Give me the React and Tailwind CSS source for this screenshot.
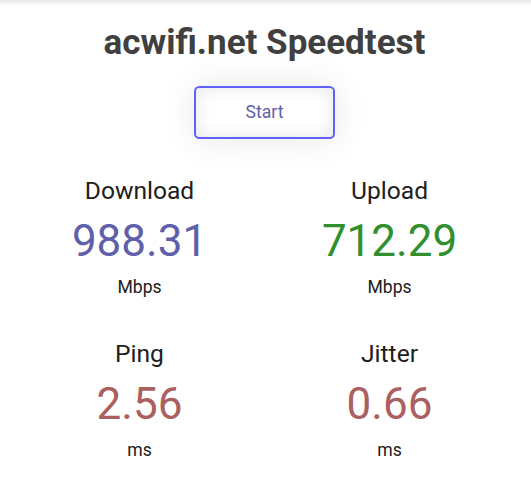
import React from 'react';

const tests = [
    [
        { name: 'Download', value: '988.31', unit: 'Mbps', color: 'text-[#6060AA]' },
        { name: 'Upload', value: '712.29', unit: 'Mbps', color: 'text-[#309030]' },
    ],
    [
        { name: 'Ping', value: '2.56', unit: 'ms', color: 'text-[#AA6060]' },
        { name: 'Jitter', value: '0.66', unit: 'ms', color: 'text-[#AA6060]' },
    ],
];

const TestArea = ({ name, value, unit, color }) => (
    <div className="w-[246px] h-[158px] flex flex-col items-center">
        <div className="mt-[2px] text-[24.6px] leading-[29px]">{name}</div>
        <div className={`mt-[10px] text-[44px] leading-[52px] ${color}`}>{value}</div>
        <div className="mt-[10px] leading-[21px]">{unit}</div>
    </div>
);

export default function App() {
    return (
        <div
            className="relative min-h-[492px] pr-[2px] bg-white text-[#202020] text-center text-[17.6px]"
            style={{ fontFamily: 'Roboto, "Liberation Sans", sans-serif' }}
        >
            {/* thin shade along the top edge */}
            <div className="pointer-events-none absolute top-0 left-0 right-0 h-[6px] bg-gradient-to-b from-[#e6e6e6] to-white/0" />

            <h1 className="pt-[22px] text-[35px] leading-[41px] font-bold text-[#404040]">
                acwifi.net Speedtest
            </h1>

            <div className="mt-[23px] flex justify-center">
                <button className="w-[141px] h-[53px] border-[2.6px] border-[#6060FF] rounded-[5.3px] text-[#6060AA] leading-[49px] shadow-[0_0_35px_rgba(0,0,0,0.1),inset_0_0_17px_rgba(0,0,0,0.1)]">
                    Start
                </button>
            </div>

            <div className="mt-[35px] flex flex-col items-center gap-[5px]">
                {tests.map((row, i) => (
                    <div key={i} className="flex gap-[4px]">
                        {row.map((t) => (
                            <TestArea key={t.name} {...t} />
                        ))}
                    </div>
                ))}
            </div>
        </div>
    );
}
